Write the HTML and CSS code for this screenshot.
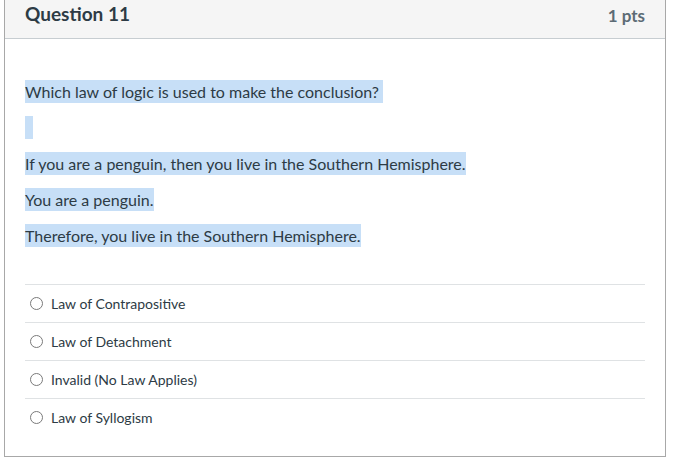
FILE: index.html
```html
<!DOCTYPE html>
<html>
<head>
<meta charset="utf-8">
<link rel="stylesheet" href="styles.css">
</head>
<body>
<div class="card">
  <div class="header">
    <span class="title">Question 11</span>
    <span class="pts">1 pts</span>
  </div>
  <div class="content">
    <div class="question-text">
      <p><span class="hl">Which law of logic is used to make the conclusion?&nbsp;</span></p>
      <p><span class="hl empty"></span></p>
      <p><span class="hl">If you are a penguin, then you live in the Southern Hemisphere.</span></p>
      <p><span class="hl">You are a penguin.</span></p>
      <p><span class="hl">Therefore, you live in the Southern Hemisphere.</span></p>
    </div>
    <div class="answers">
      <label class="answer"><span class="radio"></span><span>Law of Contrapositive</span></label>
      <label class="answer"><span class="radio"></span><span>Law of Detachment</span></label>
      <label class="answer"><span class="radio"></span><span>Invalid (No Law Applies)</span></label>
      <label class="answer"><span class="radio"></span><span>Law of Syllogism</span></label>
    </div>
  </div>
</div>
</body>
</html>
```
FILE: styles.css
```css
html, body {
  margin: 0;
  padding: 0;
  background: #ffffff;
}
body {
  font-family: Lato, "Liberation Sans", sans-serif;
  color: #2d3b45;
}
.card {
  margin-left: 4px;
  width: 660px;
  border: 1px solid #a8a8a8;
  border-top: none;
  background: #fff;
}
.header {
  background: #f5f5f5;
  border-bottom: 1px solid #c7cdd1;
  display: flex;
  justify-content: space-between;
  align-items: flex-start;
  padding: 0 20px;
  box-sizing: border-box;
  height: 39px;
}
.title {
  font-weight: 700;
  font-size: 19px;
  line-height: 20px;
  margin-top: 4px;
}
.pts {
  font-weight: 700;
  font-size: 17px;
  line-height: 20px;
  margin-top: 6px;
  color: #5c6b75;
}
.content {
  padding: 41px 20px 20px;
}
.question-text p {
  margin: 0 0 13px;
  font-size: 16px;
  line-height: 23px;
  height: 23px;
}
.hl {
  display: inline-block;
  background: #c7dff7;
  line-height: 23px;
  height: 23px;
  vertical-align: top;
}
.hl.empty {
  width: 8px;
}
.answers {
  margin-top: 37px;
}
.answer {
  display: flex;
  align-items: center;
  height: 37px;
  border-top: 1px solid #dfe2e4;
  font-size: 14px;
  color: #2d3b45;
}
.radio {
  width: 11px;
  height: 11px;
  border: 1px solid #7a7a7a;
  border-radius: 50%;
  margin-left: 5px;
  margin-right: 8px;
  flex: none;
}
```
